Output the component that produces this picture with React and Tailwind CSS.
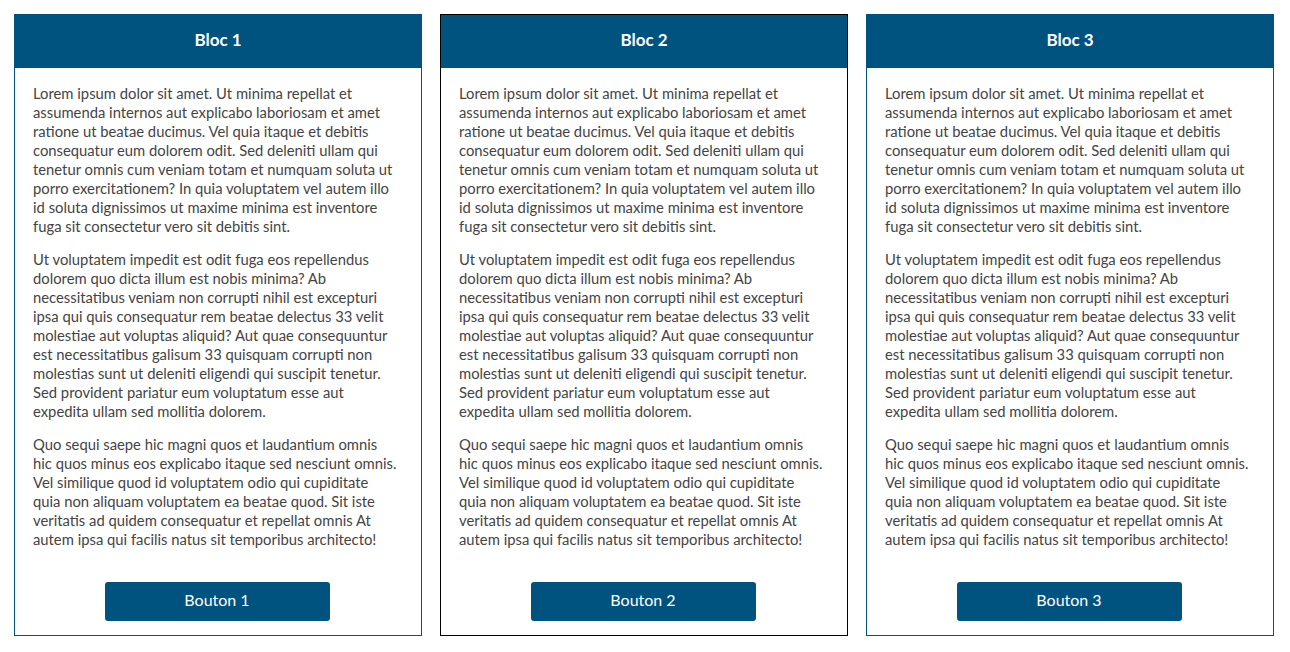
const paragraphs = [
  [
    "Lorem ipsum dolor sit amet. Ut minima repellat et",
    "assumenda internos aut explicabo laboriosam et amet",
    "ratione ut beatae ducimus. Vel quia itaque et debitis",
    "consequatur eum dolorem odit. Sed deleniti ullam qui",
    "tenetur omnis cum veniam totam et numquam soluta ut",
    "porro exercitationem? In quia voluptatem vel autem illo",
    "id soluta dignissimos ut maxime minima est inventore",
    "fuga sit consectetur vero sit debitis sint.",
  ],
  [
    "Ut voluptatem impedit est odit fuga eos repellendus",
    "dolorem quo dicta illum est nobis minima? Ab",
    "necessitatibus veniam non corrupti nihil est excepturi",
    "ipsa qui quis consequatur rem beatae delectus 33 velit",
    "molestiae aut voluptas aliquid? Aut quae consequuntur",
    "est necessitatibus galisum 33 quisquam corrupti non",
    "molestias sunt ut deleniti eligendi qui suscipit tenetur.",
    "Sed provident pariatur eum voluptatum esse aut",
    "expedita ullam sed mollitia dolorem.",
  ],
  [
    "Quo sequi saepe hic magni quos et laudantium omnis",
    "hic quos minus eos explicabo itaque sed nesciunt omnis.",
    "Vel similique quod id voluptatem odio qui cupiditate",
    "quia non aliquam voluptatem ea beatae quod. Sit iste",
    "veritatis ad quidem consequatur et repellat omnis At",
    "autem ipsa qui facilis natus sit temporibus architecto!",
  ],
];

function Bloc({ n, border }) {
  return (
    <div className={`w-[408px] h-[622px] border ${border} bg-white flex flex-col`}>
      <div className="h-[53px] pb-[4px] bg-[#00527f] flex items-center justify-center text-white font-bold text-[17px]">
        Bloc {n}
      </div>
      <div className="flex-1 px-[18px] pt-[16px] text-[#444444] text-[14.8px] leading-[19px]">
        {paragraphs.map((lines, i) => (
          <p key={i} className="mb-[14px]">
            {lines.map((l, j) => (
              <span key={j} className="block whitespace-nowrap">{l}</span>
            ))}
          </p>
        ))}
      </div>
      <div className="flex justify-center pb-[14px]">
        <button className="w-[225px] h-[39px] pb-[3px] rounded-[3px] bg-[#00527f] text-white text-[16px] -translate-x-px">
          Bouton {n}
        </button>
      </div>
    </div>
  );
}

export default function App() {
  return (
    <div className="w-[1290px] h-[652px] bg-white pt-[14px] pl-[14px] flex gap-[18px] font-['Lato',sans-serif]">
      <Bloc n={1} border="border-[#00527f]" />
      <Bloc n={2} border="border-black" />
      <Bloc n={3} border="border-[#00527f]" />
    </div>
  );
}
